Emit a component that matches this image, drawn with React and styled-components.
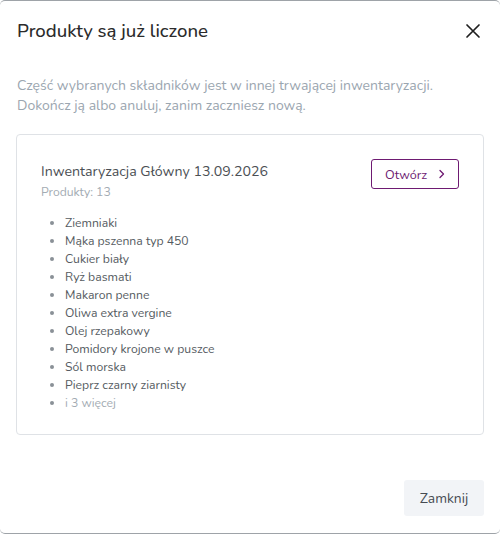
import React from "react";
import styled, { createGlobalStyle } from "styled-components";

const Global = createGlobalStyle`
  html, body { margin: 0; padding: 0; background: #fff; }
  body { font-family: "Nunito", "Lato", "Open Sans", sans-serif; }
  * { box-sizing: border-box; }
`;

const Dialog = styled.div`
  width: 500px;
  height: 534px;
  background: #fff;
  border-top: 1px solid #9ea3a8;
  border-bottom: 1px solid #9ea3a8;
  border-radius: 5px;
  display: flex;
  flex-direction: column;
  color: #333;
`;

const Header = styled.div`
  display: flex;
  justify-content: space-between;
  align-items: flex-start;
  padding: 18px 15px 0 17px;
  height: 60px;
`;

const Title = styled.h2`
  margin: 0;
  font-size: 18.6px;
  font-weight: 500;
  color: #2b2b2b;
  line-height: 24px;
`;

const CloseBtn = styled.button`
  border: 0;
  background: none;
  padding: 0;
  width: 24px;
  height: 24px;
  display: flex;
  align-items: center;
  justify-content: center;
  cursor: pointer;
`;

const Body = styled.div`
  flex: 1;
  padding: 15px 16px 0 16px;
  display: flex;
  flex-direction: column;
  gap: 18px;
`;

const Description = styled.p`
  margin: 0;
  padding-left: 1px;
  font-size: 14px;
  line-height: 20px;
  color: #9ba6b0;
`;

const Card = styled.div`
  border: 1px solid #dfe2e6;
  border-radius: 4px;
  padding: 24px 24px 26px 24px;
  height: 301px;
`;

const CardHead = styled.div`
  display: flex;
  justify-content: space-between;
  align-items: flex-start;
`;

const CardInfo = styled.div`
  margin-top: 2px;
`;

const CardTitle = styled.div`
  font-size: 14.2px;
  color: #4b4f54;
  line-height: 22px;
`;

const CardSub = styled.div`
  font-size: 12.2px;
  color: #a3abb3;
  line-height: 18px;
`;

const OpenBtn = styled.button`
  display: flex;
  align-items: center;
  gap: 11px;
  height: 30px;
  width: 88px;
  padding: 0 0 0 13px;
  border: 1px solid #6e1a72;
  border-radius: 3px;
  background: #fff;
  color: #6e1a72;
  font-family: inherit;
  font-size: 12.6px;
  cursor: pointer;
`;

const List = styled.ul`
  margin: 13px 0 0 0;
  padding: 0 0 0 24px;
  font-size: 12.2px;
  line-height: 18px;
  color: #555b61;
`;

const Item = styled.li`
  color: ${(p) => (p.$muted ? "#a3abb3" : "#555b61")};
  &::marker { color: #8a9097; }
`;

const Footer = styled.div`
  display: flex;
  justify-content: flex-end;
  padding: 0 16px 17px 16px;
`;

const CloseFooterBtn = styled.button`
  height: 36px;
  width: 80px;
  padding: 0;
  border: 0;
  border-radius: 3px;
  background: #f2f4f7;
  color: #464b52;
  font-family: inherit;
  font-size: 13.8px;
  cursor: pointer;
`;

const items = [
  "Ziemniaki",
  "Mąka pszenna typ 450",
  "Cukier biały",
  "Ryż basmati",
  "Makaron penne",
  "Oliwa extra vergine",
  "Olej rzepakowy",
  "Pomidory krojone w puszce",
  "Sól morska",
  "Pieprz czarny ziarnisty",
];

export default function App() {
  return (
    <>
      <Global />
      <Dialog>
        <Header>
          <Title>Produkty są już liczone</Title>
          <CloseBtn aria-label="Zamknij">
            <svg width="16" height="16" viewBox="0 0 16 16">
              <path d="M2 2L14 14M14 2L2 14" stroke="#1f1f1f" strokeWidth="1.7" strokeLinecap="round" />
            </svg>
          </CloseBtn>
        </Header>
        <Body>
          <Description>
            Część wybranych składników jest w innej trwającej inwentaryzacji.
            <br />
            Dokończ ją albo anuluj, zanim zaczniesz nową.
          </Description>
          <Card>
            <CardHead>
              <CardInfo>
                <CardTitle>Inwentaryzacja Główny 13.09.2026</CardTitle>
                <CardSub>Produkty: 13</CardSub>
              </CardInfo>
              <OpenBtn>
                Otwórz
                <svg width="8" height="10" viewBox="0 0 8 10">
                  <path d="M2 1.5L5.5 5L2 8.5" fill="none" stroke="#6e1a72" strokeWidth="1.3" strokeLinecap="round" strokeLinejoin="round" />
                </svg>
              </OpenBtn>
            </CardHead>
            <List>
              {items.map((t) => (
                <Item key={t}>{t}</Item>
              ))}
              <Item $muted>i 3 więcej</Item>
            </List>
          </Card>
        </Body>
        <Footer>
          <CloseFooterBtn>Zamknij</CloseFooterBtn>
        </Footer>
      </Dialog>
    </>
  );
}
